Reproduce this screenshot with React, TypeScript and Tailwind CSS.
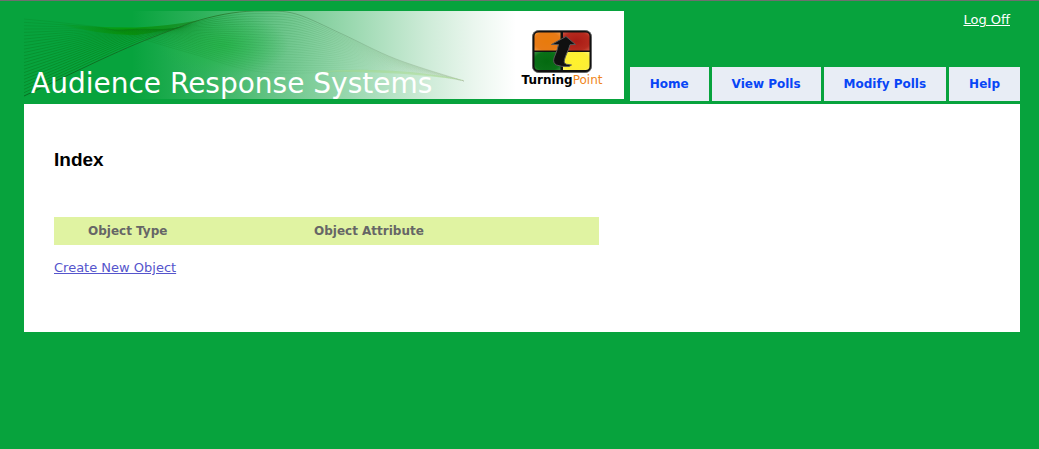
import React from "react";

type Point = [number, number];

const upperEdge: Point[] = [
  [0, 8], [40, 12], [80, 17], [112, 26], [145, 36], [176, 45], [208, 55], [238, 61], [280, 62], [330, 60], [380, 61], [440, 70],
];
const lowerEdge: Point[] = [
  [0, 85], [38, 67], [76, 49], [112, 33], [145, 20], [176, 9], [208, 2], [238, 0], [272, 3], [318, 23], [372, 48], [440, 70],
];
const lift = [0, -3, -7, -11, -8, -2, 0, 0, 0, 0, 0, 0];
const LINE_COUNT = 24;

function smoothPath(points: Point[]): string {
  let d = `M${points[0][0]} ${points[0][1]}`;
  for (let i = 0; i < points.length - 1; i++) {
    const before = points[Math.max(0, i - 1)];
    const from = points[i];
    const to = points[i + 1];
    const after = points[Math.min(points.length - 1, i + 2)];
    d += ` C${from[0] + (to[0] - before[0]) / 6} ${from[1] + (to[1] - before[1]) / 6}`;
    d += ` ${to[0] - (after[0] - from[0]) / 6} ${to[1] - (after[1] - from[1]) / 6} ${to[0]} ${to[1]}`;
  }
  return d;
}

const waves = Array.from({ length: LINE_COUNT }, (_, n) => {
  const t = n / (LINE_COUNT - 1);
  return smoothPath(
    upperEdge.map(([x, y], i): Point => [
      x + (lowerEdge[i][0] - x) * t,
      y + (lowerEdge[i][1] - y) * t + lift[i] * 4 * t * (1 - t),
    ]),
  );
});

function BannerArt() {
  return (
    <svg className="col-start-1 row-start-1 h-full w-full" viewBox="0 0 600 88" preserveAspectRatio="none" aria-hidden="true">
      <defs>
        <linearGradient id="fade" x1="0" x2="1" y1="0" y2="0">
          <stop offset="0.18" stopColor="#07a33d" />
          <stop offset="0.3" stopColor="#2fb25c" />
          <stop offset="0.43" stopColor="#6cc68b" />
          <stop offset="0.55" stopColor="#9cd9b1" />
          <stop offset="0.67" stopColor="#cdebd7" />
          <stop offset="0.75" stopColor="#eaf6ee" />
          <stop offset="0.82" stopColor="#ffffff" />
        </linearGradient>
        <linearGradient id="stroke" gradientUnits="userSpaceOnUse" x1="0" x2="440" y1="0" y2="0">
          <stop offset="0" stopColor="#067a1c" stopOpacity="0.8" />
          <stop offset="0.25" stopColor="#078010" stopOpacity="0.7" />
          <stop offset="0.38" stopColor="#087a18" stopOpacity="0.5" />
          <stop offset="0.55" stopColor="#2f9650" stopOpacity="0.4" />
          <stop offset="1" stopColor="#8ca875" stopOpacity="0.05" />
        </linearGradient>
        <linearGradient id="edge" gradientUnits="userSpaceOnUse" x1="0" x2="440" y1="0" y2="0">
          <stop offset="0" stopColor="#075c16" />
          <stop offset="0.45" stopColor="#20691c" stopOpacity="0.85" />
          <stop offset="0.65" stopColor="#4d8a5a" stopOpacity="0.6" />
          <stop offset="1" stopColor="#98a58c" stopOpacity="0.2" />
        </linearGradient>
        <radialGradient id="glow">
          <stop offset="0" stopColor="#1eb440" stopOpacity="0.7" />
          <stop offset="1" stopColor="#1eb440" stopOpacity="0" />
        </radialGradient>
        <linearGradient id="crest" x1="0" x2="1" y1="0" y2="0">
          <stop offset="0" stopColor="#079a10" stopOpacity="0" />
          <stop offset="0.5" stopColor="#079a06" stopOpacity="0.9" />
          <stop offset="1" stopColor="#127a14" stopOpacity="0.5" />
        </linearGradient>
      </defs>
      <rect width="600" height="88" fill="url(#fade)" />
      <ellipse cx="200" cy="34" rx="65" ry="32" fill="url(#glow)" />
      <path d="M30 12Q75 17 112 16.500Q145 15 176 9Q145 20 112 24Q75 24 30 12Z" fill="url(#crest)" />
      <g fill="none" strokeWidth="0.8">
        {waves.map((d, i) => (
          <path
            key={i}
            d={d}
            stroke={i === LINE_COUNT - 1 ? "url(#edge)" : "url(#stroke)"}
            opacity={0.35 + (0.65 * i) / (LINE_COUNT - 1)}
          />
        ))}
      </g>
      <path d="M290 61Q365 54 440 69Q365 59 290 61Z" fill="#a5d98a" opacity="0.5" />
    </svg>
  );
}

function TurningPointMark() {
  return (
    <svg width="60" height="43" viewBox="0 0 60 43" aria-hidden="true">
      <defs>
        <radialGradient id="orange" r="0.75"><stop offset="0" stopColor="#e87b0c" /><stop offset="0.65" stopColor="#e87b16" /><stop offset="1" stopColor="#f2a257" /></radialGradient>
        <radialGradient id="red" r="0.75"><stop offset="0" stopColor="#a91b15" /><stop offset="0.65" stopColor="#b52a1e" /><stop offset="1" stopColor="#d4604e" /></radialGradient>
        <radialGradient id="green" r="0.75"><stop offset="0" stopColor="#046a10" /><stop offset="0.65" stopColor="#0a7018" /><stop offset="1" stopColor="#4b9950" /></radialGradient>
        <radialGradient id="yellow" r="0.75"><stop offset="0" stopColor="#fff22c" /><stop offset="0.65" stopColor="#fcee35" /><stop offset="1" stopColor="#fff88c" /></radialGradient>
        <clipPath id="tiles"><rect x="2.5" y="2.5" width="55" height="37.5" rx="4" /></clipPath>
      </defs>
      <rect x="0.5" y="0.5" width="59" height="42" rx="6" fill="#111111" stroke="#656565" />
      <g clipPath="url(#tiles)">
        <rect x="2" y="2" width="26.5" height="18.5" fill="url(#orange)" />
        <rect x="31" y="2" width="27" height="18.5" fill="url(#red)" />
        <rect x="2" y="22" width="26.5" height="19" fill="url(#green)" />
        <rect x="31" y="22" width="27" height="19" fill="url(#yellow)" />
      </g>
      <path
        d="M34 6.500L43.500 14.500L38 14.700Q37 19 34.500 24Q31.500 31 32.500 33Q33 34.500 39.500 35L37 36.500Q29 37 24.500 35Q20.500 33 22 28Q25.500 20 26.500 14.500L19.500 14.500Z"
        fill="#101010"
        stroke="#595959"
      />
    </svg>
  );
}

const tabs = ["Home", "View Polls", "Modify Polls", "Help"];

export default function App() {
  return (
    <div className="min-h-screen border-t border-[#6f6f6f] bg-[#07a33d] pr-[19px] pb-6 pl-6 font-['Verdana','DejaVu_Sans',sans-serif]">
      <header className="flex justify-between">
        <div className="mt-[10px] mb-[5px] grid h-[88px] w-[600px] shrink-0">
          <BannerArt />
          <div className="col-start-1 row-start-1 flex justify-between pr-[22px] pl-[7px]">
            <div className="self-end font-['DejaVu_Sans',sans-serif] text-[28px] leading-[30px] whitespace-nowrap text-white">
              Audience Response Systems
            </div>
            <div className="flex w-20 flex-col items-center pt-[19px]">
              <TurningPointMark />
              <div className="mt-[1px] flex items-baseline text-[12px] leading-3 whitespace-nowrap">
                <span className="font-bold text-black">Turning</span>
                <span className="text-[#ef8519]">Point</span>
              </div>
            </div>
          </div>
        </div>
        <div className="flex flex-col items-end justify-between pb-[3px]">
          <a href="#logoff" className="mt-[11px] mr-[10px] text-[13px] leading-4 text-white underline">Log Off</a>
          <nav className="flex gap-[3px]">
            {tabs.map((tab) => (
              <a
                key={tab}
                href="#"
                className="bg-[#e8edf5] px-5 py-[9px] text-[12px] leading-4 font-bold whitespace-nowrap text-[#0846f5]"
              >
                {tab}
              </a>
            ))}
          </nav>
        </div>
      </header>
      <main className="bg-white px-[30px] pt-11 pb-[53px]">
        <h1 className="font-['Liberation_Sans',sans-serif] text-[19px] leading-6 font-bold text-black">Index</h1>
        <table className="mt-[45px] w-[545px] table-fixed border-collapse bg-[#e0f3a2] text-[12px] leading-4 text-[#666666]">
          <thead>
            <tr>
              <th className="w-[226px] py-[6px] pl-[34px] text-left font-bold">Object Type</th>
              <th className="py-[6px] pl-[34px] text-left font-bold">Object Attribute</th>
            </tr>
          </thead>
        </table>
        <a href="#create" className="mt-[15px] inline-block text-[13px] leading-4 text-[#5555cc] underline">Create New Object</a>
      </main>
    </div>
  );
}
